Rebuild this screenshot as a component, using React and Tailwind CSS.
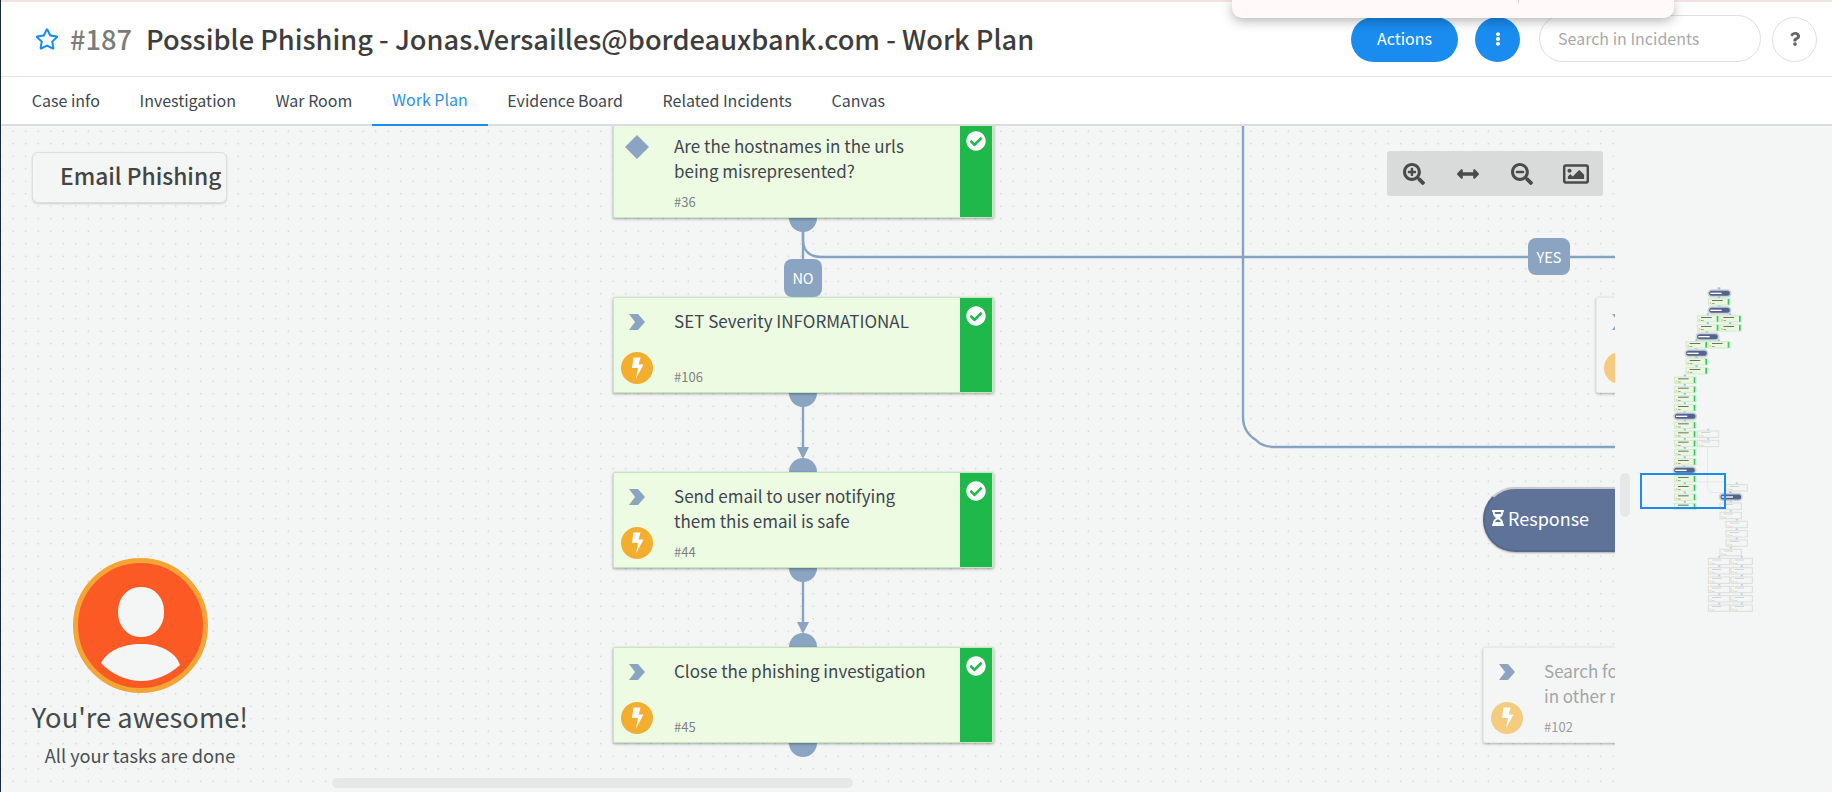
import React from "react";
import {
  FaRegStar, FaEllipsisV, FaQuestion, FaSearchPlus, FaSearchMinus, FaArrowsAltH, FaRegImage,
  FaCheckCircle, FaHourglassHalf,
} from "react-icons/fa";

const Chevron = () => (
  <svg width="16" height="16" viewBox="0 0 16 16" className="shrink-0">
    <polygon points="0,0 9,0 16,8 9,16 0,16 6,8" fill="#8aa4c2" />
  </svg>
);

const Diamond = () => (
  <svg width="24" height="24" viewBox="0 0 24 24" className="shrink-0">
    <polygon points="12,0 24,12 12,24 0,12" fill="#8aa4c2" />
  </svg>
);

const Bolt = ({ muted }) => (
  <div className={`flex h-8 w-8 items-center justify-center rounded-full ${muted ? "bg-[#f5cb80]" : "bg-[#f4ae2f]"}`}>
    <svg width="14" height="22" viewBox="0 0 14 22">
      <polygon points="3.5,0.5 10.5,0.5 8.6,7.5 13.5,7.5 6,21.5 8,11 2,11" fill="#fff" />
    </svg>
  </div>
);

function Card({ pos, icon = "chev", lines = [], id, bolt = true, muted = false }) {
  return (
    <div
      className={`absolute flex h-[96px] ${pos} ${
        muted
          ? "w-[300px] border border-[#e8eaea] bg-[#f4f6f5] shadow-[0_1px_3px_rgba(0,0,0,0.3)] rounded-[2px]"
          : "w-[381px] border border-[#c6e6c0] border-r-2 bg-[#edfbe2] shadow-[0_1px_3px_rgba(0,0,0,0.35)] rounded-[2px]"
      }`}
    >
      <div className="flex w-[60px] shrink-0 flex-col items-center pt-[16px] pr-[14px]">
        <div className="flex h-[16px] w-[16px] items-center justify-center">
          {icon === "chev" ? <Chevron /> : <Diamond />}
        </div>
        {bolt && <div className="mt-[22px]"><Bolt muted={muted} /></div>}
      </div>
      <div className="flex min-w-0 flex-1 flex-col pt-[10px]">
        <div className={`h-[60px] text-[17px] leading-[25px] whitespace-nowrap ${muted ? "text-[#a3a5a6]" : "text-[#3f4650]"}`}>
          {lines.map((l) => <div key={l}>{l}</div>)}
        </div>
        <div className={`mt-[1px] text-[13px] leading-[16px] ${muted ? "text-[#9a9c9d]" : "text-[#7d8480]"}`}>{id}</div>
      </div>
      {!muted && (
        <div className="flex w-[32px] shrink-0 justify-center bg-[#1fb84a] pt-[8px]">
          <FaCheckCircle className="h-[20px] w-[20px] text-white" />
        </div>
      )}
    </div>
  );
}

const LINE = "#86a3c2";

function Wires() {
  const nodes = [218 - 126, 393 - 126, 568 - 126, 743 - 126];
  const tops = [472 - 126, 647 - 126];
  return (
    <svg className="absolute left-0 top-0" width="1615" height="666" viewBox="0 0 1615 666" fill="none">
      <path d="M1243 0 V291 Q1243 306 1256 314 Q1262 321 1275 321 H1615" stroke={LINE} strokeWidth="2.4" />
      <path d="M803 105 V115 Q804 131 822 131 H1615" stroke={LINE} strokeWidth="2.4" />
      <path d="M803 105 V140" stroke={LINE} strokeWidth="2.4" />
      {nodes.map((y) => <circle key={y} cx="803" cy={y} r="14" fill="#8aa4c2" />)}
      {tops.map((y) => <circle key={y} cx="803" cy={y} r="14" fill="#8aa4c2" />)}
      <path d="M803 280 V325" stroke={LINE} strokeWidth="2.4" />
      <path d="M803 455 V500" stroke={LINE} strokeWidth="2.4" />
      <polygon points="797,321 809,321 803,333" fill="#8aa4c2" />
      <polygon points="797,496 809,496 803,508" fill="#8aa4c2" />
    </svg>
  );
}

function Minimap() {
  const sections = [[265,60],[265,111],[229,190],[196,240],[162,429],[160,591],[299,671]];
  const green = [[265,86],[232,137],[299,137],[232,164],[299,164],[198,215],[265,215],[198,266],[198,293],[163,321],[163,349],[163,376],[163,404],[163,456],[163,483],[163,511],[163,538],[163,566],[163,617],[163,644],[163,672],[163,700]];
  const grey = [[232,483],[232,511],[318,644],[300,699],[300,727],[318,754],[318,782],[318,810],[300,838],
    ...[865,893,921,949,977,1005].flatMap((y) => [[265,y],[333,y]])];
  return (
    <svg className="absolute left-0 top-0 blur-[0.4px]" width="217" height="666" viewBox="-15 -432 651 1998" fill="none">
      <path d="M263 530 V650 Q263 668 285 668 H300" stroke="#e3e8ee" strokeWidth="3" />
      <path d="M230 636 H320" stroke="#e3e8ee" strokeWidth="3" />
      {sections.map(([x, y]) => (
        <g key={`s${x}${y}`}>
          <rect x={x} y={y} width="67" height="20" rx="10" fill="#4f6590" stroke="#cfd1d4" strokeWidth="5" />
          <rect x={x + 6} y={y + 8} width="34" height="4" fill="#fff" />
          <rect x={x + 28} y={y - 8} width="8" height="6" fill="#a9bdd3" />
        </g>
      ))}
      {green.map(([x, y]) => (
        <g key={`g${x}${y}`}>
          <rect x={x} y={y} width="65" height="19" fill="#e9f9de" stroke="#d0ead0" strokeWidth="3" />
          <rect x={x + 58} y={y + 1} width="5" height="17" fill="#3cc468" />
          <rect x={x + 11} y={y + 4} width="32" height="3" fill="#6c716a" />
          <rect x={x + 11} y={y + 14} width="8" height="2" fill="#7c8079" />
          <rect x={x + 4} y={y + 11} width="5" height="5" fill="#f4c873" />
          <rect x={x + 28} y={y - 7} width="7" height="5" fill="#a9bdd3" />
        </g>
      ))}
      {grey.map(([x, y]) => (
        <g key={`x${x}${y}`}>
          <rect x={x} y={y} width="64" height="19" fill="#f4f5f5" stroke="#dcdddd" strokeWidth="3" />
          <rect x={x + 11} y={y + 4} width="28" height="2" fill="#c4c6c8" />
          <rect x={x + 11} y={y + 14} width="8" height="2" fill="#c9cbcb" />
          <rect x={x + 4} y={y + 11} width="5" height="5" fill="#f6dfb4" />
          <rect x={x + 29} y={y - 7} width="7" height="5" fill="#c4d2e2" />
        </g>
      ))}
    </svg>
  );
}

export default function App() {
  const tabs = ["Case info", "Investigation", "War Room", "Work Plan", "Evidence Board", "Related Incidents", "Canvas"];
  return (
    <div className="relative flex h-[792px] w-[1832px] flex-col overflow-hidden bg-white font-['Noto_Sans_CJK_JP','Noto_Sans',sans-serif] text-[#404040]">
      {/* toast peeking in from the top */}
      <div className="absolute left-[1232px] top-0 z-20 h-[18px] w-[442px] rounded-b-[10px] bg-[#fff9f9] shadow-[0_3px_12px_rgba(0,0,0,0.3)]">
        <div className="absolute left-[286px] top-0 h-[3px] w-px bg-[#f3c9b0]" />
      </div>
      <div className="h-[2px] w-full shrink-0 bg-[#f3e3dc]" />

      {/* header */}
      <header className="flex h-[75px] shrink-0 items-center border-b border-[#e4e4e4] pl-[35px] pr-[15px]">
        <FaRegStar className="h-[24px] w-[24px] text-[#1a8cf0]" />
        <span className="-mt-[3px] ml-[11px] text-[27.2px] leading-[36px] font-medium text-[#7b7b7b]">#187</span>
        <h1 className="-mt-[3px] ml-[14px] text-[27.2px] leading-[36px] font-medium text-[#3d3d3d]">
          Possible Phishing - Jonas.Versailles@bordeauxbank.com - Work Plan
        </h1>
        <button className="ml-auto h-[45px] w-[107px] rounded-full bg-[#1a8cf0] pb-[2px] text-[16px] text-white">Actions</button>
        <button className="ml-[17px] flex h-[45px] w-[45px] items-center justify-center rounded-full bg-[#1a8cf0] text-white">
          <FaEllipsisV className="h-[14px] w-[14px]" />
        </button>
        <input
          placeholder="Search in Incidents"
          className="-mt-[1px] ml-[19px] h-[47px] w-[222px] rounded-full border border-[#dfdfdf] bg-white px-[18px] pb-[2px] text-[16px] outline-none placeholder:text-[#a9a9a9]"
        />
        <button className="ml-[11px] flex h-[45px] w-[45px] items-center justify-center rounded-full border border-[#dfdfdf] text-[#666]">
          <FaQuestion className="h-[14px] w-[14px]" />
        </button>
      </header>

      {/* tabs */}
      <nav className="flex h-[49px] shrink-0 border-b-2 border-[#dcdedd] pl-[12px]">
        {tabs.map((t) => (
          <div
            key={t}
            className={`-mb-[2px] flex h-[49px] items-center px-[19.8px] pb-[3px] text-[16px] ${
              t === "Work Plan" ? "border-b-2 border-[#1a8cf0] text-[#2f8fe8]" : "text-[#40484f]"
            }`}
          >
            {t}
          </div>
        ))}
      </nav>

      {/* body */}
      <main className="flex min-h-0 flex-1 bg-[#f4f6f5]">
        <section className="relative h-full w-[1615px] shrink-0 overflow-hidden bg-[radial-gradient(circle,#c8cac9_0.7px,transparent_1px)] bg-[size:12.5px_12.5px] bg-[position:7px_-1px]">
          <Wires />

          <Card pos="left-[613px] top-[-4px]" icon="diamond" bolt={false}
            lines={["Are the hostnames in the urls", "being misrepresented?"]} id="#36" />
          <Card pos="left-[613px] top-[171px]" lines={["SET Severity INFORMATIONAL"]} id="#106" />
          <Card pos="left-[613px] top-[346px]" lines={["Send email to user notifying", "them this email is safe"]} id="#44" />
          <Card pos="left-[613px] top-[521px]" lines={["Close the phishing investigation"]} id="#45" />

          <Card pos="left-[1596px] top-[171px]" muted lines={[]} id="" />
          <Card pos="left-[1483px] top-[521px]" muted lines={["Search for this email", "in other mailboxes"]} id="#102" />

          <div className="absolute left-[784px] top-[133px] flex h-[38px] w-[38px] items-center justify-center rounded-[8px] bg-[#8aa4c2] text-[14.5px] text-white">NO</div>
          <div className="absolute left-[1528px] top-[112px] flex h-[37px] w-[42px] items-center justify-center rounded-[8px] bg-[#8aa4c2] text-[14.5px] text-white">YES</div>

          <div className="absolute left-[1483px] top-[361px] flex h-[65px] w-[300px] items-center rounded-l-[32px] border-2 border-[#55698e] border-t-[#c8cacb] bg-[#5f7399] pb-[3px] pl-[6px] text-[18px] text-white shadow-[0_1px_2px_rgba(0,0,0,0.3)]">
            <FaHourglassHalf className="h-[16px] w-[14px]" />
            <span className="ml-[3px]">Response</span>
          </div>

          {/* title chip */}
          <div className="absolute left-[32px] top-[26px] flex h-[51px] w-[195px] items-center whitespace-nowrap rounded-[6px] border border-[#dcdedd] bg-[#f4f6f5] pb-[3px] pl-[27px] text-[22.8px] font-medium text-[#444] shadow-[0_1px_2px_rgba(0,0,0,0.15)]">
            Email Phishing
          </div>

          {/* zoom bar */}
          <div className="absolute left-[1387px] top-[25px] grid h-[45px] w-[216px] grid-cols-4 place-items-center rounded-[3px] bg-[#d9dbda] text-[#4a4a4a]">
            <FaSearchPlus className="h-[22px] w-[22px]" />
            <FaArrowsAltH className="h-[22px] w-[24px]" />
            <FaSearchMinus className="h-[22px] w-[22px]" />
            <FaRegImage className="h-[26px] w-[26px]" />
          </div>

          {/* reward */}
          <div className="absolute left-0 top-[432px] flex w-[280px] flex-col items-center">
            <svg width="135" height="135" viewBox="0 0 135 135">
              <circle cx="67.5" cy="67.5" r="65" fill="#fb5a25" stroke="#f5a535" strokeWidth="5" />
              <rect x="45" y="29" width="46" height="50" rx="22" ry="24" fill="#f4f6f5" />
              <path d="M28 105 C34 93 50 86 68 86 C86 86 102 93 107 107 C96 117 82 123 68 123 C54 123 38 116 28 105 Z" fill="#f4f6f5" />
            </svg>
            <div className="mt-[3px] text-[27.3px] leading-[40px] text-[#454a4c]">You're awesome!</div>
            <div className="mt-[6px] text-[18.2px] leading-[26px] text-[#4a4f51]">All your tasks are done</div>
          </div>

          {/* horizontal scrollbar */}
          <div className="absolute bottom-[4px] left-[332px] h-[10px] w-[521px] rounded-full bg-[#e6e8e7]" />
        </section>

        <aside className="relative h-full flex-1">
          <Minimap />
          <div className="absolute left-[25px] top-[347px] h-[36px] w-[86px] border-2 border-[#1a8cf0]" />
          <div className="absolute left-[5px] top-[347px] h-[44px] w-[10px] rounded-full bg-[#e6e8e7]" />
        </aside>
      </main>
      <div className="absolute left-0 top-0 h-full w-px bg-[#1b2a3a]" />
    </div>
  );
}
